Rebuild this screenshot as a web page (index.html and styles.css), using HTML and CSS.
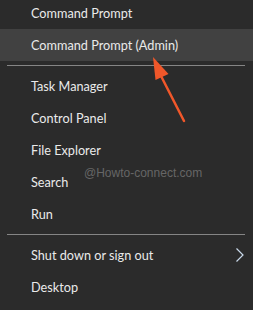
FILE: index.html
```html
<!DOCTYPE html>
<html>
<head>
<meta charset="utf-8">
<link rel="stylesheet" href="styles.css">
</head>
<body>
<div class="menu">
  <div class="item">Command Prompt</div>
  <div class="item active">Command Prompt (Admin)</div>
  <div class="sep"></div>
  <div class="item">Task Manager</div>
  <div class="item">Control Panel</div>
  <div class="item">File Explorer</div>
  <div class="item">Search</div>
  <div class="item">Run</div>
  <div class="sep"></div>
  <div class="item sub">Shut down or sign out
    <svg class="chev" width="10" height="16" viewBox="0 0 10 16"><polyline points="1.5,1.5 8,8 1.5,14.5" fill="none" stroke="#c9d9ea" stroke-width="1.2"/></svg>
  </div>
  <div class="item">Desktop</div>
</div>
<div class="watermark">@Howto-connect.com</div>
<svg class="arrow" width="253" height="310" viewBox="0 0 253 310">
  <line x1="184" y1="121" x2="160" y2="74" stroke="#f0572a" stroke-width="2.5" stroke-linecap="round"/>
  <polygon points="153,57 155.5,80 168.5,74" fill="#f0572a"/>
</svg>
</body>
</html>
```
FILE: styles.css
```css
html, body {
  margin: 0;
  padding: 0;
  background: #2b2b2b;
  width: 253px;
  height: 310px;
  overflow: hidden;
}
body {
  position: relative;
  font-family: Lato, "Noto Sans", sans-serif;
  font-size: 12.7px;
  color: #eaeaea;
}
.menu {
  margin-top: -3px;
  display: flex;
  flex-direction: column;
}
.item {
  height: 32px;
  display: flex;
  align-items: center;
  padding-left: 31px;
  position: relative;
}
.item.active {
  background: #414141;
}
.sub {
  justify-content: space-between;
  padding-right: 8px;
}
.sep {
  height: 9px;
  display: flex;
  align-items: center;
  padding: 0 8px 0 7px;
}
.sep::before {
  content: "";
  flex: 1;
  height: 1px;
  background: #858585;
}
.watermark {
  position: absolute;
  left: 84px;
  top: 166px;
  font-family: "Liberation Sans", Arial, sans-serif;
  font-size: 12px;
  color: #666666;
}
.arrow {
  position: absolute;
  left: 0;
  top: 0;
}
```
